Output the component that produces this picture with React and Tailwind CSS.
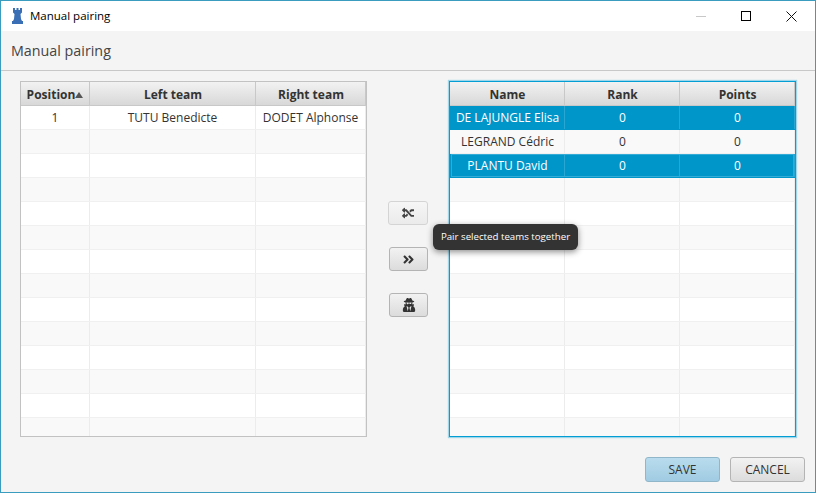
import React from 'react';
import { FaAngleDoubleRight, FaRandom, FaUserSecret } from 'react-icons/fa';

const rowIndexes = [0, 1, 2, 3, 4, 5, 6, 7, 8, 9, 10, 11, 12, 13];

function DataTable({ columns, rows, selected = [], focusRow, focused }) {
    return (
        <div className={`w-[347px] h-[356px] flex flex-col overflow-hidden border ${focused ? 'border-[#039ed3] shadow-[0_0_1px_1px_rgba(3,158,211,0.35)]' : 'border-[#c2c2c2]'}`}>
            <div className="flex h-6 shrink-0 bg-gradient-to-b from-[#f2f2f2] to-[#d8d8d8] border-b border-[#c8c8c8]">
                {columns.map((c) => (
                    <div key={c.name} style={{ width: c.width }} className={`shrink-0 flex items-center justify-center pt-[2px] border-r border-[#c8c8c8] text-xs font-bold text-[#333] ${c.sorted ? '' : 'pl-px'}`}>
                        {c.name}
                        {c.sorted && <span className="w-0 h-0 border-x-4 border-x-transparent border-b-[6px] border-b-[#555]" />}
                    </div>
                ))}
            </div>
            <div className="flex-1 overflow-hidden">
                {rowIndexes.map((i) => {
                    const isSel = selected.includes(i);
                    return (
                        <div key={i} className={`flex h-6 border-b relative ${isSel ? 'bg-[#0096c9] border-[#0096c9] text-white' : i % 2 ? 'bg-[#f9f9f9] border-[#f0f0f0] text-[#333]' : 'bg-white border-[#f0f0f0] text-[#333]'}`}>
                            {columns.map((c, j) => (
                                <div key={c.name} style={{ width: c.width }} className={`shrink-0 flex items-center justify-center whitespace-nowrap border-r text-xs ${focused ? 'pl-px' : ''} ${isSel ? 'border-[#2aa6d2]' : 'border-[#ececec]'}`}>
                                    {rows[i] ? rows[i][j] : ''}
                                </div>
                            ))}
                            {focusRow === i && <div className="absolute inset-x-px inset-y-0 border border-[#33abd6]" />}
                        </div>
                    );
                })}
            </div>
        </div>
    );
}

function IconButton({ icon, wide }) {
    return (
        <button className={`h-6 ${wide ? 'w-[40px] ml-[-1px] bg-gradient-to-b from-[#f6f6f6] to-[#ebebeb] border-[#d4d4d4]' : 'w-[39px] bg-gradient-to-b from-[#f2f2f2] to-[#dcdcdc] border-[#b4b4b4]'} border rounded-[3px] flex items-center justify-center text-[#333]`}>
            {icon}
        </button>
    );
}

function RookIcon() {
    return (
        <svg width="11" height="16" viewBox="0 0 11 16" className="mr-[7px]">
            <path d="M1 0 H3 V2 H4.5 V0 H6.5 V2 H8 V0 H10 V4.5 L8.5 6 L9 11 L10 13 H11 V16 H0 V13 H1 L2 11 L2.5 6 L1 4.5 Z" fill="#3a6fb5" />
        </svg>
    );
}

export default function App() {
    return (
        <div className="w-[816px] h-[493px] flex flex-col overflow-hidden bg-[#f4f4f4] border border-[#3a9cbf] text-[#333]" style={{ fontFamily: '"Open Sans", sans-serif' }}>
            <div className="h-[30px] shrink-0 bg-white flex items-center pl-[11px] text-black">
                <RookIcon />
                <span className="text-[11.5px]">Manual pairing</span>
                <div className="ml-auto flex items-center">
                    <div className="w-[10px] h-px bg-[#c8c8c8] mr-[35px]" />
                    <div className="w-[10px] h-[10px] border border-black mr-[35px]" />
                    <svg width="11" height="11" viewBox="0 0 11 11" className="mr-[18px]">
                        <path d="M0.5 0.5 L10.5 10.5 M10.5 0.5 L0.5 10.5" stroke="#111" strokeWidth="1" fill="none" />
                    </svg>
                </div>
            </div>
            <div className="h-10 shrink-0 flex items-center pl-[10px] border-b border-[#c8c8c8] text-[14.3px] text-[#444]">
                Manual pairing
            </div>
            <div className="flex pl-[19px] pt-[10px] relative">
                <DataTable
                    columns={[
                        { name: 'Position', width: 69, sorted: true },
                        { name: 'Left team', width: 166 },
                        { name: 'Right team', width: 110 },
                    ]}
                    rows={[['1', 'TUTU Benedicte', 'DODET Alphonse']]}
                />
                <div className="w-[82px] shrink-0 flex flex-col gap-[22px] pl-[22px] pt-[120px]">
                    <IconButton wide icon={<FaRandom className="text-[12px] text-[#444] -scale-x-100" />} />
                    <IconButton icon={<FaAngleDoubleRight className="text-[13px]" />} />
                    <IconButton icon={<FaUserSecret className="text-[14px]" />} />
                </div>
                <DataTable
                    focused
                    columns={[
                        { name: 'Name', width: 115 },
                        { name: 'Rank', width: 115 },
                        { name: 'Points', width: 115 },
                    ]}
                    rows={[
                        ['DE LAJUNGLE Elisa', '0', '0'],
                        ['LEGRAND Cédric', '0', '0'],
                        ['PLANTU David', '0', '0'],
                    ]}
                    selected={[0, 2]}
                    focusRow={2}
                />
                <div className="absolute left-[432px] top-[153px] h-[26px] w-[145px] flex items-center justify-center rounded-[6px] bg-[#333333] text-white text-[9.7px] whitespace-nowrap shadow-[0_2px_6px_rgba(0,0,0,0.45)]">
                    Pair selected teams together
                </div>
            </div>
            <div className="flex justify-end gap-[10px] pr-[10px] pt-[20px]">
                <button className="w-[75px] h-[25px] rounded-[3px] border border-[#8fb6c9] bg-gradient-to-b from-[#b9dcee] to-[#a0cbe2] text-xs text-[#333]">SAVE</button>
                <button className="w-[75px] h-[25px] rounded-[3px] border border-[#b4b4b4] bg-gradient-to-b from-[#f2f2f2] to-[#dcdcdc] text-xs text-[#333]">CANCEL</button>
            </div>
        </div>
    );
}
